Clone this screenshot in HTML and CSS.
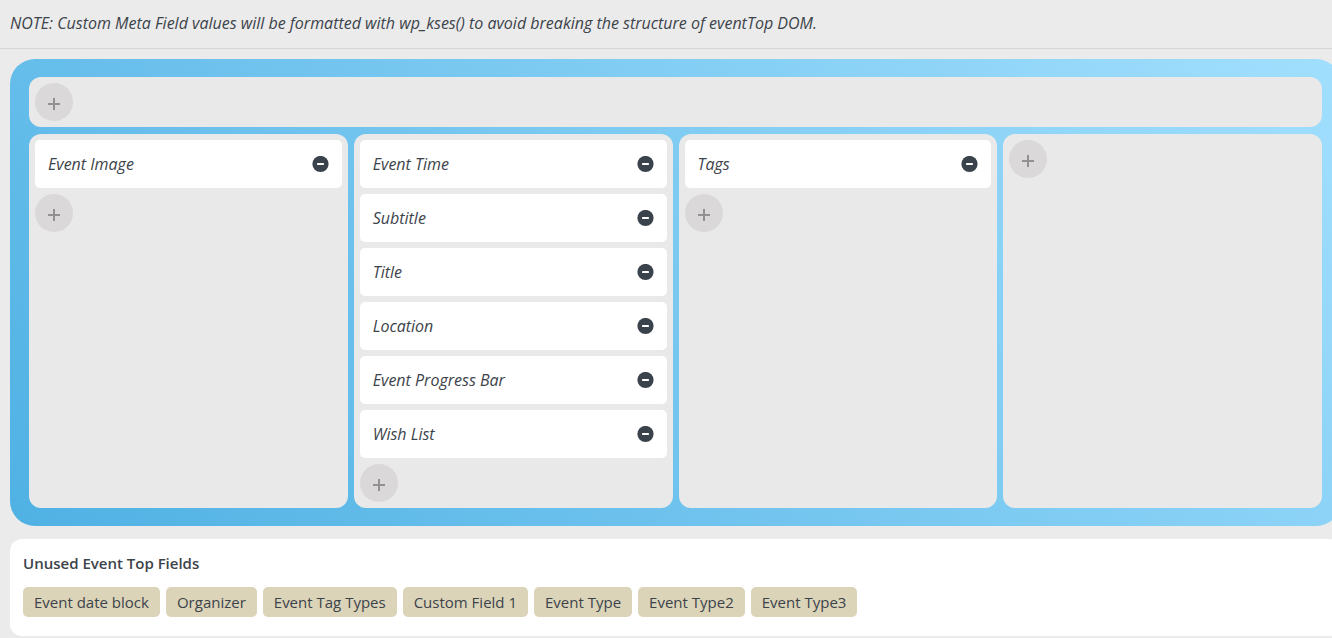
FILE: index.html
```
<!DOCTYPE html>
<html lang="en">
<head>
    <meta charset="UTF-8">
    <meta name="viewport" content="width=device-width, initial-scale=1.0">
    <title>Event Top Fields</title>
    <link rel="stylesheet" href="styles.css">
</head>
<body>
    <!-- shared icons -->
    <svg class="icon-defs" aria-hidden="true">
        <symbol id="minus" viewBox="0 0 17 17">
            <circle cx="8.5" cy="8" r="8.1" fill="#3a424b"/>
            <rect x="5" y="7" width="7" height="2" rx="0.4" fill="#fff"/>
        </symbol>
        <symbol id="plus" viewBox="0 0 12 12">
            <path d="M6 0v12M0 6h12" fill="none" stroke="#929191" stroke-width="2"/>
        </symbol>
    </svg>

    <p class="note">NOTE: Custom Meta Field values will be formatted with wp_kses() to avoid breaking the structure of eventTop DOM.</p>

    <div class="content">
        <div class="board">
            <div class="zone">
                <button type="button" class="add" aria-label="Add field"><svg><use href="#plus"/></svg></button>
            </div>

            <div class="columns">
                <div class="zone">
                    <div class="field"><span>Event Image</span><button type="button" class="remove" aria-label="Remove Event Image"><svg><use href="#minus"/></svg></button></div>
                    <button type="button" class="add" aria-label="Add field"><svg><use href="#plus"/></svg></button>
                </div>

                <div class="zone">
                    <div class="field"><span>Event Time</span><button type="button" class="remove" aria-label="Remove Event Time"><svg><use href="#minus"/></svg></button></div>
                    <div class="field"><span>Subtitle</span><button type="button" class="remove" aria-label="Remove Subtitle"><svg><use href="#minus"/></svg></button></div>
                    <div class="field"><span>Title</span><button type="button" class="remove" aria-label="Remove Title"><svg><use href="#minus"/></svg></button></div>
                    <div class="field"><span>Location</span><button type="button" class="remove" aria-label="Remove Location"><svg><use href="#minus"/></svg></button></div>
                    <div class="field"><span>Event Progress Bar</span><button type="button" class="remove" aria-label="Remove Event Progress Bar"><svg><use href="#minus"/></svg></button></div>
                    <div class="field"><span>Wish List</span><button type="button" class="remove" aria-label="Remove Wish List"><svg><use href="#minus"/></svg></button></div>
                    <button type="button" class="add" aria-label="Add field"><svg><use href="#plus"/></svg></button>
                </div>

                <div class="zone">
                    <div class="field"><span>Tags</span><button type="button" class="remove" aria-label="Remove Tags"><svg><use href="#minus"/></svg></button></div>
                    <button type="button" class="add" aria-label="Add field"><svg><use href="#plus"/></svg></button>
                </div>

                <div class="zone">
                    <button type="button" class="add" aria-label="Add field"><svg><use href="#plus"/></svg></button>
                </div>
            </div>
        </div>

        <div class="unused">
            <h4>Unused Event Top Fields</h4>
            <div class="tags">
                <button type="button" class="tag">Event date block</button>
                <button type="button" class="tag">Organizer</button>
                <button type="button" class="tag">Event Tag Types</button>
                <button type="button" class="tag">Custom Field 1</button>
                <button type="button" class="tag">Event Type</button>
                <button type="button" class="tag">Event Type2</button>
                <button type="button" class="tag">Event Type3</button>
            </div>
        </div>
    </div>
</body>
</html>
```
FILE: styles.css
```
* {
    box-sizing: border-box;
}

body {
    margin: 0;
    background-color: #ebebeb;
    color: #3c434a;
    font-family: "Segoe UI", "Open Sans", "Noto Sans", sans-serif;
    font-size: 16px;
    line-height: 24px;
    overflow-x: hidden;
}

button {
    border: none;
    padding: 0;
    font: inherit;
    color: inherit;
    cursor: pointer;
}

.icon-defs {
    display: none;
}

.note {
    margin: 0;
    padding: 11px 10px 13px;
    border-bottom: 1px solid #d5d5d5;
    font-style: italic;
}

/* the panels run past the right edge of the window */
.content {
    margin: 10px -9px 0 10px;
}

.board {
    display: flex;
    flex-direction: column;
    gap: 7px;
    padding: 18px 19px;
    border-radius: 25px;
    background: linear-gradient(45deg, #4fb1e3, #a2dffe);
}

.columns {
    display: grid;
    grid-template-columns: repeat(4, 1fr);
    gap: 6px;
}

.zone {
    display: flex;
    flex-direction: column;
    align-items: flex-start;
    gap: 6px;
    padding: 6px;
    border-radius: 12px;
    background-color: #e9e9e9;
}

.field {
    display: flex;
    justify-content: space-between;
    align-items: center;
    width: 100%;
    height: 48px;
    padding: 0 13px;
    border-radius: 5px;
    background-color: #fff;
    font-style: italic;
}

.remove {
    display: flex;
    background: none;
}

.remove svg {
    width: 17px;
    height: 17px;
}

.add {
    display: flex;
    justify-content: center;
    align-items: center;
    width: 38px;
    height: 38px;
    padding-top: 4px;
    border-radius: 50%;
    background-color: #dad8d9;
}

.add svg {
    width: 12px;
    height: 12px;
}

.unused {
    margin-top: 13px;
    padding: 12px 13px 19px;
    border-radius: 12px;
    background-color: #fff;
}

.unused h4 {
    margin: 0 0 12px;
    font-size: 15px;
    font-weight: 600;
}

.tags {
    display: flex;
    flex-wrap: wrap;
    gap: 6px;
}

.tag {
    height: 30px;
    padding: 0 11px;
    border-radius: 5px;
    background-color: #dbd4b9;
    font-size: 15px;
}
```
